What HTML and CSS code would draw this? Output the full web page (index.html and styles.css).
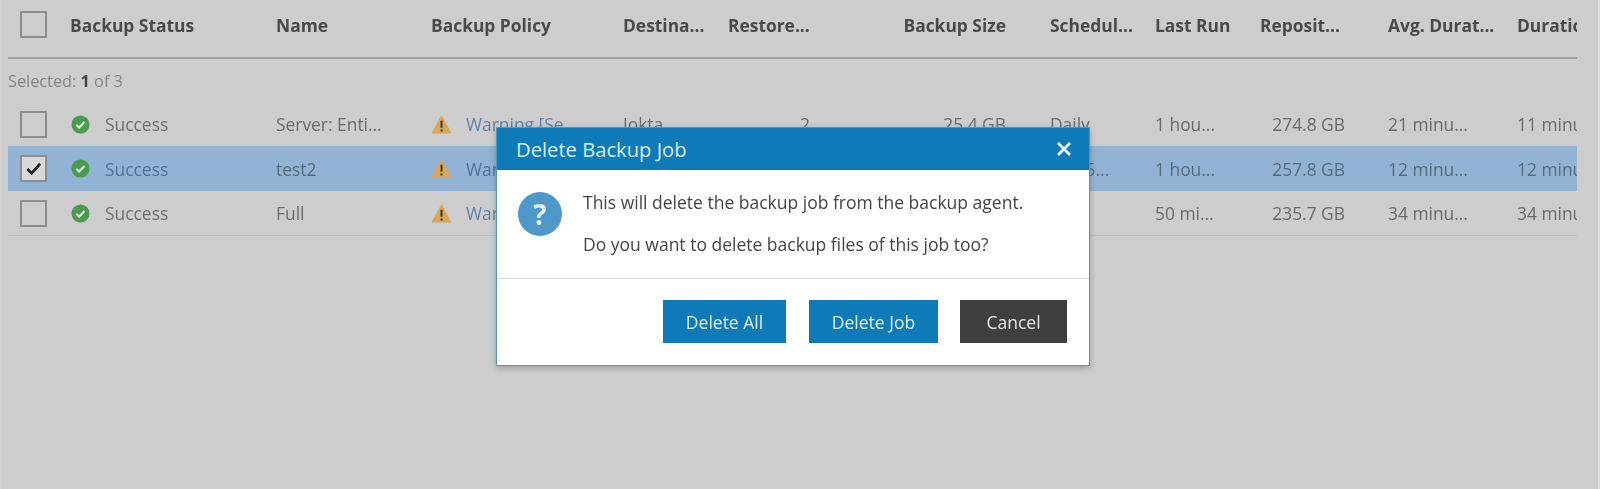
FILE: index.html
```html
<!DOCTYPE html>
<html>
<head>
    <title>Backup Jobs</title>
    <link rel="stylesheet" href="styles.css">
</head>
<body>

<div class="page">
    <table class="jobs">
        <colgroup>
            <col class="c-check"><col class="c-status"><col class="c-name"><col class="c-policy">
            <col class="c-dest"><col class="c-restore"><col class="c-size"><col class="c-sched">
            <col class="c-last"><col class="c-repo"><col class="c-avg"><col class="c-dur">
        </colgroup>
        <thead>
            <tr>
                <th><span class="box"></span></th>
                <th>Backup Status</th>
                <th>Name</th>
                <th>Backup Policy</th>
                <th>Destina...</th>
                <th>Restore...</th>
                <th class="right">Backup Size</th>
                <th class="sched">Schedul...</th>
                <th>Last Run</th>
                <th>Reposit...</th>
                <th>Avg. Durat...</th>
                <th>Duration</th>
            </tr>
        </thead>
        <tbody>
            <tr class="selected-count">
                <td colspan="12">Selected: <b>1</b> of 3</td>
            </tr>
            <tr>
                <td><span class="box"></span></td>
                <td><div class="with-icon">
                    <svg class="ok" viewBox="0 0 20 20"><circle cx="10" cy="10" r="9.5" fill="#4a9a4f"/><path d="M5.6 10.2l3 3 5.6-5.8" fill="none" stroke="#d8ead8" stroke-width="2.4"/></svg>
                    <span class="status">Success</span>
                </div></td>
                <td>Server: Enti...</td>
                <td><div class="with-icon wide">
                    <svg class="warn" viewBox="0 0 22 20"><path d="M11 1L21 19H1z" fill="#d9a75c" stroke="#d9a75c" stroke-linejoin="round"/><path d="M11 6v7.5M11 15.2v2.2" stroke="#4a3a1c" stroke-width="2.2"/></svg>
                    <span class="link">Warning [Se...</span>
                </div></td>
                <td>Jokta</td>
                <td class="restore">2</td>
                <td class="right">25.4 GB</td>
                <td class="sched">Daily</td>
                <td>1 hou...</td>
                <td class="repo">274.8 GB</td>
                <td>21 minu...</td>
                <td>11 minutes</td>
            </tr>
            <tr class="selected">
                <td><span class="box checked"><svg viewBox="0 0 20 20"><path d="M3.5 10.5l4.5 4.5 9-10" fill="none" stroke="#222" stroke-width="2.8"/></svg></span></td>
                <td><div class="with-icon">
                    <svg class="ok" viewBox="0 0 20 20"><circle cx="10" cy="10" r="9.5" fill="#4a9a4f"/><path d="M5.6 10.2l3 3 5.6-5.8" fill="none" stroke="#d8ead8" stroke-width="2.4"/></svg>
                    <span class="status">Success</span>
                </div></td>
                <td>test2</td>
                <td><div class="with-icon wide">
                    <svg class="warn" viewBox="0 0 22 20"><path d="M11 1L21 19H1z" fill="#d9a75c" stroke="#d9a75c" stroke-linejoin="round"/><path d="M11 6v7.5M11 15.2v2.2" stroke="#4a3a1c" stroke-width="2.2"/></svg>
                    <span class="link">Warning [Se...</span>
                </div></td>
                <td>Jokta</td>
                <td class="restore">2</td>
                <td class="right">25.4 GB</td>
                <td class="sched">Dail 5...</td>
                <td>1 hou...</td>
                <td class="repo">257.8 GB</td>
                <td>12 minu...</td>
                <td>12 minutes</td>
            </tr>
            <tr class="last">
                <td><span class="box"></span></td>
                <td><div class="with-icon">
                    <svg class="ok" viewBox="0 0 20 20"><circle cx="10" cy="10" r="9.5" fill="#4a9a4f"/><path d="M5.6 10.2l3 3 5.6-5.8" fill="none" stroke="#d8ead8" stroke-width="2.4"/></svg>
                    <span class="status">Success</span>
                </div></td>
                <td>Full</td>
                <td><div class="with-icon wide">
                    <svg class="warn" viewBox="0 0 22 20"><path d="M11 1L21 19H1z" fill="#d9a75c" stroke="#d9a75c" stroke-linejoin="round"/><path d="M11 6v7.5M11 15.2v2.2" stroke="#4a3a1c" stroke-width="2.2"/></svg>
                    <span class="link">Warning [Se...</span>
                </div></td>
                <td>Jokta</td>
                <td class="restore">2</td>
                <td class="right">25.4 GB</td>
                <td class="sched">Daily</td>
                <td>50 mi...</td>
                <td class="repo">235.7 GB</td>
                <td>34 minu...</td>
                <td>34 minutes</td>
            </tr>
        </tbody>
    </table>
</div>

<div class="dialog">
    <div class="dialog-title">
        <span>Delete Backup Job</span>
        <svg class="close" viewBox="0 0 16 16"><path d="M2 2l12 12M14 2L2 14" stroke="#fff" stroke-width="2.6"/></svg>
    </div>
    <div class="dialog-body">
        <div class="question">?</div>
        <div class="message">
            <p>This will delete the backup job from the backup agent.</p>
            <p>Do you want to delete backup files of this job too?</p>
        </div>
    </div>
    <div class="dialog-buttons">
        <button class="btn del-all">Delete All</button>
        <button class="btn del-job">Delete Job</button>
        <button class="btn cancel">Cancel</button>
    </div>
</div>

</body>
</html>
```

FILE: styles.css
```css
html, body {
    height: 100%;
}
body {
    margin: 0;
    box-sizing: border-box;
    background-color: #cdcdcd;
    border-right: 2px solid #dedede;
    border-left: 1px solid #d8d8d8;
    font-family: "Open Sans", sans-serif;
    font-size: 17.4px;
    color: #6a6a6a;
    overflow: hidden;
}
.page {
    padding-left: 7px;
    filter: blur(0.6px);
}
.jobs {
    width: 1569px;
    table-layout: fixed;
    border-collapse: collapse;
}
.c-check { width: 62px; }
.c-status { width: 206px; }
.c-name { width: 155px; }
.c-policy { width: 192px; }
.c-dest { width: 105px; }
.c-restore { width: 172px; }
.c-size { width: 106px; }
.c-sched { width: 149px; }
.c-last { width: 105px; }
.c-repo { width: 128px; }
.c-avg { width: 129px; }
.c-dur { width: 60px; }
th, td {
    padding: 0;
    text-align: left;
    white-space: nowrap;
    overflow: hidden;
}
th {
    height: 49px;
    padding-bottom: 8px;
    font-weight: 700;
    color: #4a4a4a;
    border-bottom: 2px solid #a0a0a0;
}
td {
    height: 44px;
}
.right {
    text-align: right;
}
th.sched, td.sched {
    padding-left: 44px;
}
td.restore {
    padding-left: 72px;
}
td.repo {
    padding-right: 43px;
    text-align: right;
}
.box {
    display: block;
    box-sizing: border-box;
    width: 27px;
    height: 27px;
    margin-left: 12px;
    border: 2px solid #8d8d8d;
}
.box.checked {
    background-color: #d8d8d8;
    padding: 2px;
}
.box svg {
    display: block;
}
.with-icon {
    display: flex;
    align-items: center;
    gap: 15px;
    padding-left: 1px;
}
.with-icon.wide {
    padding-left: 0;
    gap: 14px;
}
.ok {
    width: 19px;
    height: 19px;
    flex: none;
}
.warn {
    width: 21px;
    height: 19px;
    flex: none;
}
.link {
    color: #5f82a8;
}
.status {
    color: #6f6f6f;
}
.selected-count td {
    height: 43px;
    font-size: 16.3px;
    color: #858585;
}
.selected-count b {
    color: #444;
}
.selected td {
    height: 45px;
    background-color: #92b3d3;
    color: #566b80;
}
.selected .status, .selected .link {
    color: #4f7397;
}
.last td {
    border-bottom: 1px solid #bdbdbd;
}
.dialog {
    position: absolute;
    left: 496px;
    top: 127px;
    width: 594px;
    height: 239px;
    box-sizing: border-box;
    background-color: #fff;
    border: 1px solid #4f98bf;
    box-shadow: 0 2px 6px rgba(0, 0, 0, 0.25);
    display: flex;
    flex-direction: column;
    filter: blur(0.3px);
}
.dialog-title {
    display: flex;
    align-items: center;
    justify-content: space-between;
    height: 42px;
    padding: 0 17px 0 19px;
    background-color: #0e7bb8;
    color: #d9eef8;
    font-size: 20.2px;
}
.close {
    width: 16px;
    height: 16px;
}
.dialog-body {
    display: flex;
    gap: 21px;
    height: 109px;
    padding: 22px 0 0 21px;
    box-sizing: border-box;
    border-bottom: 1px solid #dddddd;
    color: #444;
    font-size: 17.5px;
}
.question {
    width: 44px;
    height: 44px;
    border-radius: 50%;
    background-color: #4d97c9;
    color: #e8f2f8;
    font-size: 28px;
    font-weight: 700;
    line-height: 44px;
    text-align: center;
}
.message p {
    margin: 0 0 21px 0;
    line-height: 21px;
}
.dialog-buttons {
    display: flex;
    justify-content: flex-end;
    gap: 23px;
    padding: 21px 22px 0 0;
}
.btn {
    height: 43px;
    padding: 0;
    border: none;
    font-family: "Open Sans", sans-serif;
    font-size: 17.5px;
    color: #d9eef8;
    background-color: #0e7bb8;
}
.del-all { width: 123px; }
.del-job { width: 129px; }
.cancel {
    width: 107px;
    margin-left: -1px;
    background-color: #3f3f3f;
    color: #e6e6e6;
}
```
